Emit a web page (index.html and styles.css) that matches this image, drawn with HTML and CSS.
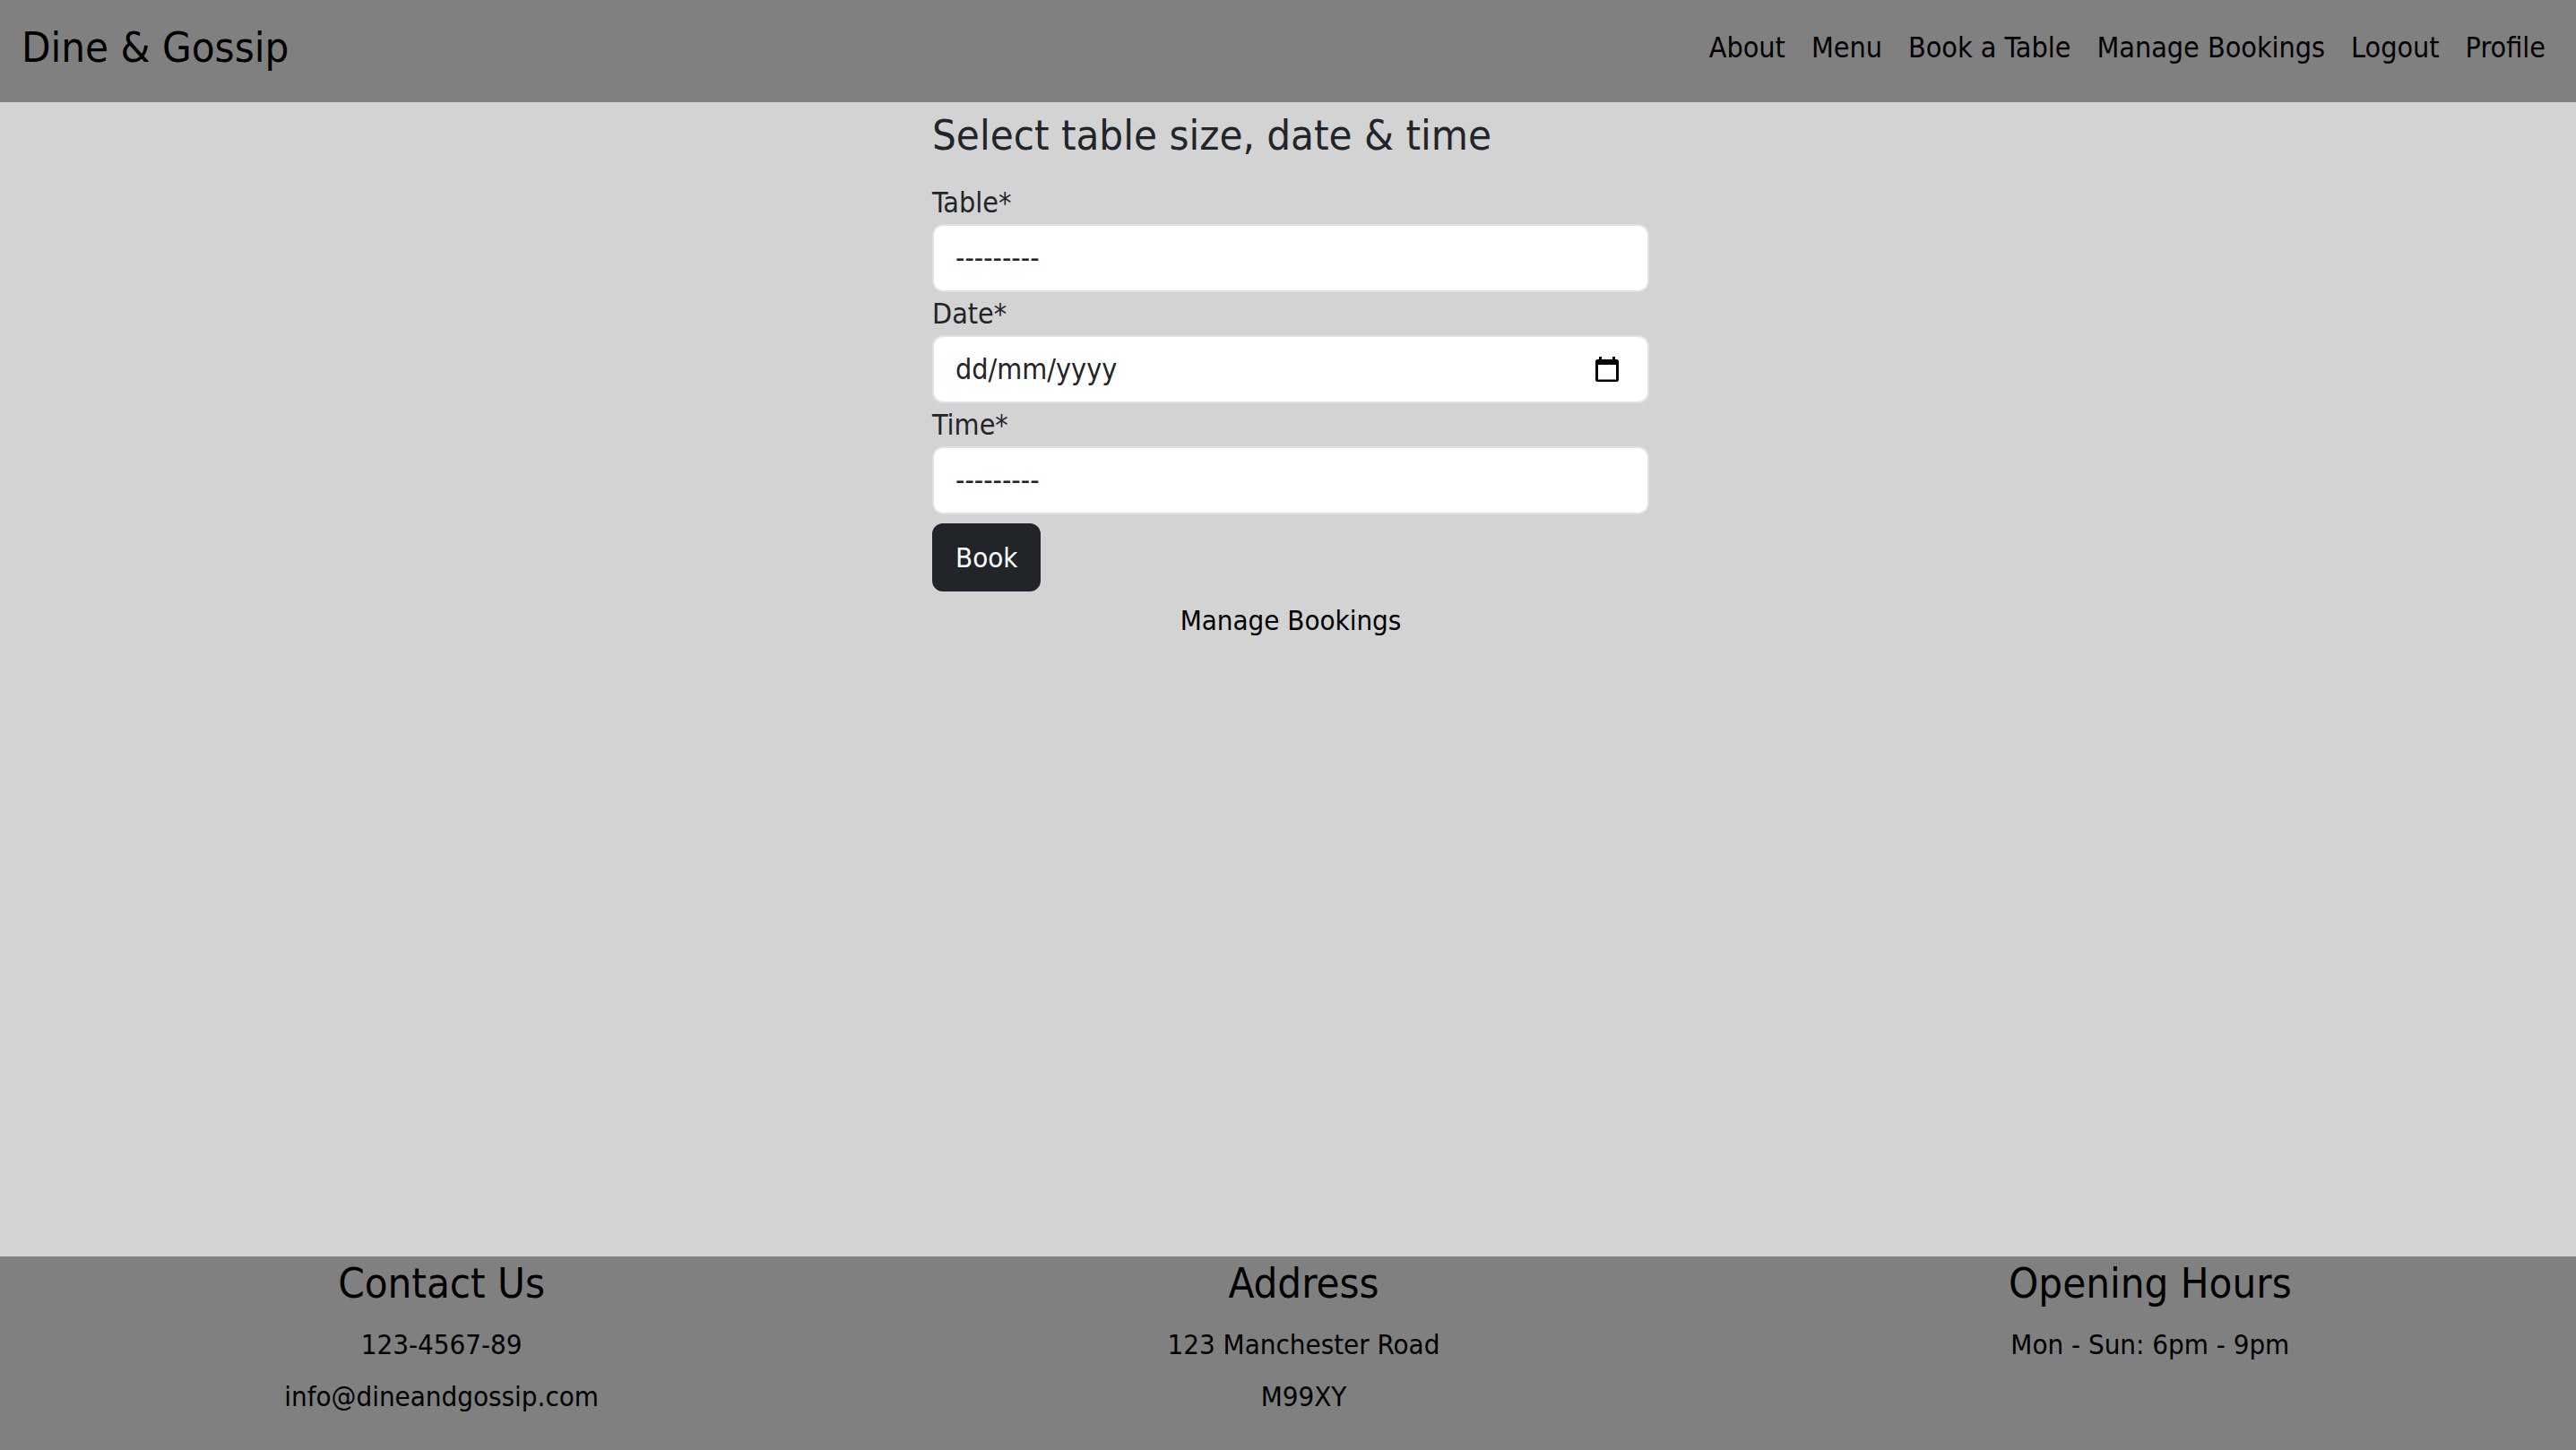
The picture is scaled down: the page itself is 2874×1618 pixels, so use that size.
FILE: index.html
```html
<!DOCTYPE html>
<html lang="en-GB">
<head>
<meta charset="utf-8">
<meta name="viewport" content="width=device-width, initial-scale=1">
<title>Dine &amp; Gossip</title>
<link rel="stylesheet" href="styles.css">
</head>
<body>
<header class="navbar">
  <a class="brand" href="#">Dine &amp; Gossip</a>
  <nav class="nav-links">
    <a href="#">About</a>
    <a href="#">Menu</a>
    <a href="#">Book a Table</a>
    <a href="#">Manage Bookings</a>
    <a href="#">Logout</a>
    <a href="#">Profile</a>
  </nav>
</header>
<main class="content">
  <form class="booking">
    <h1 class="title">Select table size, date &amp; time</h1>
    <label class="label" for="table">Table*</label>
    <select class="control" id="table"><option>---------</option></select>
    <label class="label" for="date">Date*</label>
    <div class="control date">
      <input class="date-input" id="date" type="text" placeholder="dd/mm/yyyy">
      <svg class="calendar" viewBox="0 0 26 28" aria-hidden="true">
        <path fill-rule="evenodd" d="M4 0h3v3h12V0h3v3h1.500a2.500 2.500 0 0 1 2.500 2.500v20a2.500 2.500 0 0 1-2.500 2.500h-21a2.500 2.500 0 0 1-2.500-2.500v-20a2.500 2.500 0 0 1 2.500-2.500H4zM3 9v16.500h20V9z"/>
      </svg>
    </div>
    <label class="label" for="time">Time*</label>
    <select class="control" id="time"><option>---------</option></select>
    <button class="submit" type="submit">Book</button>
    <a class="manage" href="#">Manage Bookings</a>
  </form>
</main>
<footer class="footer">
  <section>
    <h2 class="title">Contact Us</h2>
    <p>123-4567-89</p>
    <p>info@dineandgossip.com</p>
  </section>
  <section>
    <h2 class="title">Address</h2>
    <p>123 Manchester Road</p>
    <p>M99XY</p>
  </section>
  <section>
    <h2 class="title">Opening Hours</h2>
    <p>Mon - Sun: 6pm - 9pm</p>
  </section>
</footer>
</body>
</html>
```
FILE: styles.css
```css
* {
  box-sizing: border-box;
}

body {
  display: flex;
  flex-direction: column;
  min-height: 100vh;
  margin: 0;
  background: #d3d3d3;
  color: #212529;
  font: 31px/48px Tahoma, "DejaVu Sans Condensed", "Noto Sans", sans-serif;
}

a {
  color: #000;
  text-decoration: none;
}

.navbar {
  display: flex;
  justify-content: space-between;
  align-items: center;
  padding: 20px 34px 28px 24px;
  background: #808080;
}

.brand {
  font-size: 47px;
  line-height: 66px;
}

.nav-links {
  display: flex;
  gap: 29px;
  font-size: 32px;
}

.content {
  flex: 1;
  padding-left: 6px;
}

.booking {
  display: flex;
  flex-direction: column;
  width: 100%;
  max-width: 800px;
  margin: 0 auto;
}

.title {
  margin: 0 0 14px;
  font-size: 47px;
  font-weight: 400;
  line-height: 74px;
}

.label {
  font-size: 32px;
}

.control {
  width: 100%;
  height: 76px;
  padding: 12px 24px;
  border: 2px solid #dee2e6;
  border-radius: 12px;
  background: #fff;
  color: #212529;
  font: inherit;
  font-size: 32px;
  appearance: none;
}

.date {
  display: flex;
  align-items: center;
  padding-right: 32px;
}

.date-input {
  flex: 1;
  min-width: 0;
  padding: 0;
  border: 0;
  outline: 0;
  color: #212529;
  font: inherit;
}

.date-input::placeholder {
  color: #212529;
  opacity: 1;
}

.calendar {
  width: 26px;
  height: 28px;
}

.submit {
  align-self: flex-start;
  margin: 10px 0 8px;
  padding: 12px 24px;
  border: 2px solid #212529;
  border-radius: 12px;
  background: #212529;
  color: #fff;
  font: inherit;
}

.manage {
  align-self: center;
}

.footer {
  display: flex;
  justify-content: space-around;
  padding-bottom: 26px;
  background: #808080;
  color: #000;
  text-align: center;
}

.footer .title {
  line-height: 60px;
}

.footer p {
  margin: 0 0 10px;
}
```
